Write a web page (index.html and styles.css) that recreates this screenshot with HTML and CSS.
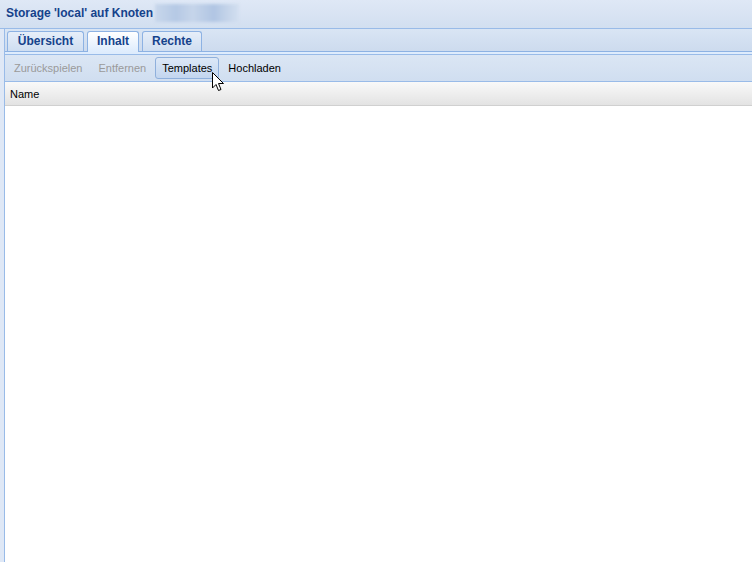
FILE: index.html
```html
<!DOCTYPE html>
<html lang="de">
<head>
    <meta charset="UTF-8">
    <title>Storage 'local'</title>
    <link rel="stylesheet" href="styles.css">
</head>
<body>

    <div class="title-bar">
        <span class="title">Storage 'local' auf Knoten</span>
        <span class="node-name"></span>
    </div>

    <div class="panel">
        <div class="tab-strip">
            <div class="tab">Übersicht</div>
            <div class="tab active">Inhalt</div>
            <div class="tab">Rechte</div>
        </div>
        <div class="tab-spacer"></div>

        <div class="toolbar">
            <div class="tb-btn disabled">Zurückspielen</div>
            <div class="tb-btn disabled">Entfernen</div>
            <div class="tb-btn over">Templates</div>
            <div class="tb-btn">Hochladen</div>
        </div>

        <div class="grid-header">
            <div class="col-name">Name</div>
        </div>
        <div class="grid-body"></div>
    </div>

    <!-- Mauszeiger über dem Templates-Button -->
    <svg class="cursor" width="13" height="20" viewBox="0 0 13 20">
        <path d="M0.5 0.5 L0.5 16 L4 12.5 L6.5 18.5 L9 17.5 L6.5 11.5 L11.5 11.5 Z"
              fill="#fff" stroke="#000" stroke-width="1" stroke-linejoin="miter"/>
    </svg>

</body>
</html>
```

FILE: styles.css
```css
body {
    margin: 0;
    height: 562px;
    overflow: hidden;
    font-family: "Liberation Sans", Arial, sans-serif;
    font-size: 11px;
    background-color: #dfe8f6;
    display: flex;
    flex-direction: column;
}
.title-bar {
    height: 25px;
    padding-bottom: 3px;
    display: flex;
    align-items: center;
    padding-left: 6px;
    background: linear-gradient(#dfe8f6, #d2dff0);
    border-bottom: 1px solid #99bbe8;
}
.title {
    font-weight: bold;
    font-size: 12px;
    color: #15428b;
}
.node-name {
    width: 84px;
    height: 18px;
    margin-left: 2px;
    background: linear-gradient(90deg, #c8d7eb, #b5c9e5 25%, #c6d5ea 45%, #b0c5e3 70%, #c3d3e9 85%, #d3dff0);
    filter: blur(1.5px);
}
.panel {
    flex: 1;
    margin-left: 4px;
    border-left: 1px solid #99bbe8;
    display: flex;
    flex-direction: column;
    background-color: #fff;
}
.tab-strip {
    height: 22px;
    display: flex;
    align-items: flex-end;
    gap: 3px;
    padding-left: 2px;
    background: linear-gradient(#d9e5f4, #cddbee);
    border-bottom: 1px solid #8db2e3;
}
.tab {
    height: 19px;
    line-height: 19px;
    padding: 0 9px;
    font-weight: bold;
    color: #15428b;
    font-size: 12px;
    background: linear-gradient(#e6eef9, #cfdef1);
    border: 1px solid #8db2e3;
    border-bottom: none;
    border-radius: 3px 3px 0 0;
}
.tab:first-child {
    width: 57px;
    text-align: center;
}
.tab.active {
    background: linear-gradient(#ffffff, #deecfd);
    height: 20px;
    margin-bottom: -1px;
}
.tab-spacer {
    height: 2px;
    background-color: #deecfd;
    border-bottom: 1px solid #99bbe8;
}
.toolbar {
    height: 26px;
    display: flex;
    align-items: center;
    gap: 2px;
    padding-left: 2px;
    background: linear-gradient(#dbe6f4, #d0def0);
    border-bottom: 1px solid #99bbe8;
}
.tb-btn {
    height: 19px;
    line-height: 18px;
    padding: 1px 6px 0;
    border: 1px solid transparent;
    border-radius: 3px;
    color: #000;
}
.tb-btn.disabled {
    color: #9a9a9a;
}
.tb-btn.over {
    border-color: #8fb0dc;
    background: linear-gradient(#dce8f7, #c3d6ef);
}
.grid-header {
    height: 22px;
    padding-top: 1px;
    display: flex;
    align-items: center;
    padding-left: 5px;
    background: linear-gradient(#f9f9f9, #e3e3e3);
    border-bottom: 1px solid #d0d0d0;
}
.grid-body {
    flex: 1;
    background-color: #fff;
}
.cursor {
    position: absolute;
    left: 212px;
    top: 72px;
}
```
